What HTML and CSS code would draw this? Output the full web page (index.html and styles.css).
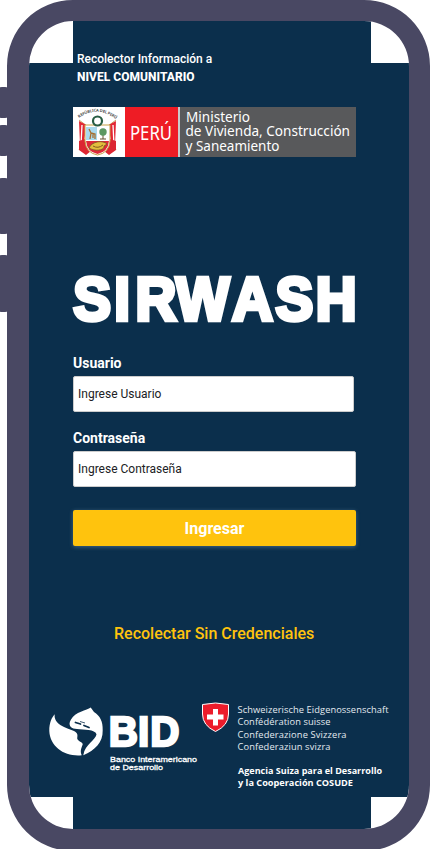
FILE: index.html
```html
<!DOCTYPE html>
<html lang="es">
<head>
<meta charset="utf-8">
<title>SIRWASH</title>
<link rel="stylesheet" href="styles.css">
</head>
<body>
<main class="phone">
  <i class="key key-a"></i><i class="key key-b"></i><i class="key key-c"></i><i class="key key-d"></i>
  <header class="intro">
    <p class="intro-line">Recolector Información a</p>
    <p class="intro-level">NIVEL COMUNITARIO</p>
  </header>
  <section class="ministry">
    <svg class="crest" viewBox="0 0 52 50">
      <path id="arc" d="M6 11Q24-2 43 12" fill="none"/>
      <text class="crest-text"><textPath href="#arc" textLength="40">REPÚBLICA DEL PERÚ</textPath></text>
      <path d="M6 13 14 19 10 36 6 43M43 13 35 19 39 36 43 43" stroke="#c9a55c" stroke-width="1" fill="none"/>
      <path d="M6 14 17 20 13 37 7 38ZM43 14 32 20 36 37 42 38Z" fill="#e32633"/>
      <path d="M9 18 8 38M14 20 11 38M40 18 41 38M35 20 38 38" stroke="#fff" stroke-width="1.3"/>
      <path d="M6 34 12 32 18 44 13 48 6 43ZM43 34 37 32 31 44 36 48 43 43Z" fill="#dc2632"/>
      <path d="M12 18H37V34Q36 46 24.500 48 13 46 12 34Z" fill="#fff" stroke="#c7a044"/>
      <circle cx="24.500" cy="14" r="4.500" fill="#fff" stroke="#285d43" stroke-width="2.200"/>
      <path d="M13 20H24V33H13Z" fill="#a9d9ed"/>
      <path d="M13 34H36Q35 45 24.500 47 14 45 13 34Z" fill="#df2938"/>
      <path d="M16 22 18 26 22 27 22 32M18 26 17 32M20 27 20 31" fill="none" stroke="#a66f2f" stroke-width="1.300"/>
      <path d="M30 25V32M27 32H33" stroke="#65502e"/>
      <circle cx="30" cy="25" r="3.700" fill="#5c9862"/>
      <path d="M16 41C19 34 30 33 34 37L31 39C32 43 23 45 16 41Z" fill="#e3bd3d" stroke="#765b25" stroke-width=".8"/>
      <path d="M20 39Q25 42 30 38" fill="none" stroke="#805c20"/>
    </svg>
    <div class="country"><svg viewBox="0 0 52 50"><text x="5" y="33" class="peru" textLength="42" lengthAdjust="spacingAndGlyphs">PERÚ</text></svg></div>
    <svg class="department" viewBox="0 0 176 50">
      <text x="6" y="14.500" textLength="64" lengthAdjust="spacingAndGlyphs">Ministerio</text>
      <text x="5.500" y="29" textLength="164.500" lengthAdjust="spacingAndGlyphs">de Vivienda, Construcción</text>
      <text x="5.500" y="43.500" textLength="94" lengthAdjust="spacingAndGlyphs">y Saneamiento</text>
    </svg>
  </section>
  <svg class="brand" viewBox="0 0 287 54"><text transform="scale(.92 1)" x="2.4 47.1 70.2 114.2 174.9 222.2 265.9" y="46.800">SIRWASH</text></svg>
  <form class="login">
    <label for="user">Usuario</label>
    <input id="user" class="user" placeholder="Ingrese Usuario">
    <label for="password">Contraseña</label>
    <input id="password" type="password" placeholder="Ingrese Contraseña">
    <button type="button">Ingresar</button>
  </form>
  <a class="guest">Recolectar Sin Credenciales</a>
  <footer class="partners">
    <svg class="bid" viewBox="0 0 151 70">
      <path d="M4.700 8.300C4 13 7 17 10.700 19.300 15 22 20 23.500 24 25 29 28 27 30 27.300 33 29 36 33 36 32.700 38.500 31 43 30 45 31.700 49.300 15 51 0 41-.7 25-.8 17 2 11 4.700 8.300Z" fill="#fff"/>
      <path d="M40.700 1.500C37 4 25 6 21 13.500 17 20 22 23 27 23 34 24 45 23 46.500 28.300 46 34 35 38 33.300 49.300 45 44 53 37 52.700 24.300 53 15 50 10 44 6Z" fill="#fff"/>
      <path d="M25.500 16.500 30.500 18M34 19.500 39 21.500" stroke="#0b2f4c" stroke-width="1.800" stroke-linecap="round"/>
      <path d="M30 15.500 35 17" stroke="#0b2f4c" stroke-width=".8"/>
      <text transform="scale(.94 1)" x="62.500 93.700 106.700" y="40" class="bid-name">BID</text>
      <text x="60" y="55.500" class="bid-sub" textLength="87" lengthAdjust="spacingAndGlyphs">Banco Interamericano</text>
      <text x="60" y="63.500" class="bid-sub" textLength="53" lengthAdjust="spacingAndGlyphs">de Desarrollo</text>
    </svg>
    <svg class="swiss" viewBox="0 0 195 95">
      <path d="M1.500 2.500Q14.500-.5 27.500 2.500V12Q27.500 23.500 14.500 29.500 1.500 23.500 1.500 12Z" fill="#ec1c2b" stroke="#fff"/>
      <path d="M12 7H17V12.500H22.500V17.500H17V23.500H12V17.500H6V12.500H12Z" fill="#fff"/>
      <g class="swiss-lines">
        <text x="36.500" y="11" textLength="151">Schweizerische Eidgenossenschaft</text>
        <text x="36.500" y="23" textLength="93">Confédération suisse</text>
        <text x="36.500" y="35.500" textLength="109">Confederazione Svizzera</text>
        <text x="36.500" y="48" textLength="93">Confederaziun svizra</text>
      </g>
      <g class="agency">
        <text x="37" y="72" textLength="144" lengthAdjust="spacingAndGlyphs">Agencia Suiza para el Desarrollo</text>
        <text x="37" y="83.500" textLength="115" lengthAdjust="spacingAndGlyphs">y la Cooperación COSUDE</text>
      </g>
    </svg>
  </footer>
</main>
</body>
</html>
```
FILE: styles.css
```css
* { box-sizing: border-box; }
html, body { height: 849px; overflow: hidden; }
body { margin: 0; background: #fff; font-family: Roboto, "Liberation Sans", sans-serif; }
p { margin: 0; }
svg { display: block; overflow: visible; }
.phone {
  position: relative;
  width: 423px;
  height: 851px;
  margin-left: 7px;
  border: solid #494863;
  border-width: 21px 21px 22px 22px;
  border-radius: 66px;
  background:
    linear-gradient(#0b2f4c, #0b2f4c) 44px 0 / 298px 100% no-repeat padding-box,
    linear-gradient(#0b2f4c, #0b2f4c) 0 42px / 100% 734px no-repeat padding-box,
    #fff;
}
.key { position: absolute; left: -31px; width: 11px; background: #494863; border-radius: 4px; }
.key-a { top: 66px; height: 31px; }
.key-b { top: 104px; height: 31px; }
.key-c { top: 157px; height: 56px; }
.key-d { top: 234px; height: 57px; }
.intro { padding: 29px 0 0 48px; color: #fff; }
.intro-line { font-size: 12px; font-weight: 500; line-height: 18px; }
.intro-level { font-size: 12px; font-weight: 800; line-height: 18px; letter-spacing: .03px; }
.ministry { display: flex; width: 283px; height: 50px; margin: 21px 0 0 44px; background: #58595b; }
.crest { width: 52px; height: 50px; background: #fff; }
.country { width: 55px; height: 50px; background: #ee1c25; border-right: 2px solid #c9c9cb; }
.country svg { width: 52px; height: 50px; }
.department { width: 176px; height: 50px; }
.ministry text { fill: #fff; font-family: "Noto Sans", sans-serif; font-size: 14px; }
.ministry .peru { font-size: 19px; }
.ministry .crest-text { font-size: 4px; fill: #333; font-weight: 600; }
.brand { width: 287px; height: 54px; margin: 116px 0 0 42px; }
.brand text { font: bold 61.5px "Liberation Sans", sans-serif; fill: #fff; stroke: #fff; stroke-width: 4.4px; }
.login { display: flex; flex-direction: column; width: 283px; margin: 27px 0 0 44px; }
.login label { color: #fff; font-size: 14px; font-weight: 700; line-height: 18px; margin-bottom: 4px; }
.login input { width: 283px; height: 36px; margin: 0 0 17px; padding: 0 4px; border: 1px solid #ccc; border-radius: 2px; background: #fff; font: 12px Roboto, sans-serif; }
.login .user { width: 281px; }
.login input::placeholder { color: #202124; opacity: 1; }
.login button { height: 36px; margin-top: 6px; padding: 0; border: 0; border-radius: 2px; background: #ffc30d; color: #fff; font: 700 16px Roboto, sans-serif; box-shadow: 0 1px 4px rgba(130, 170, 200, .45); }
.guest { display: block; margin: 77px 0 0 85px; color: #ffc30d; font-size: 16px; font-weight: 500; line-height: 22px; }
.partners { display: flex; margin: 57px 0 0 21px; }
.bid { width: 151px; height: 70px; margin-top: 4px; }
.swiss { width: 195px; height: 95px; }
.bid-name { font: bold 43px "Liberation Sans", sans-serif; fill: #fff; stroke: #fff; stroke-width: 2.5px; }
.bid-sub { font: 8px "Liberation Sans", sans-serif; fill: #fff; stroke: #fff; stroke-width: .3px; }
.swiss-lines { font: 9.3px "Open Sans", sans-serif; fill: #e4eaf0; }
.agency { font: bold 9.4px "Open Sans", sans-serif; fill: #fff; }
```
